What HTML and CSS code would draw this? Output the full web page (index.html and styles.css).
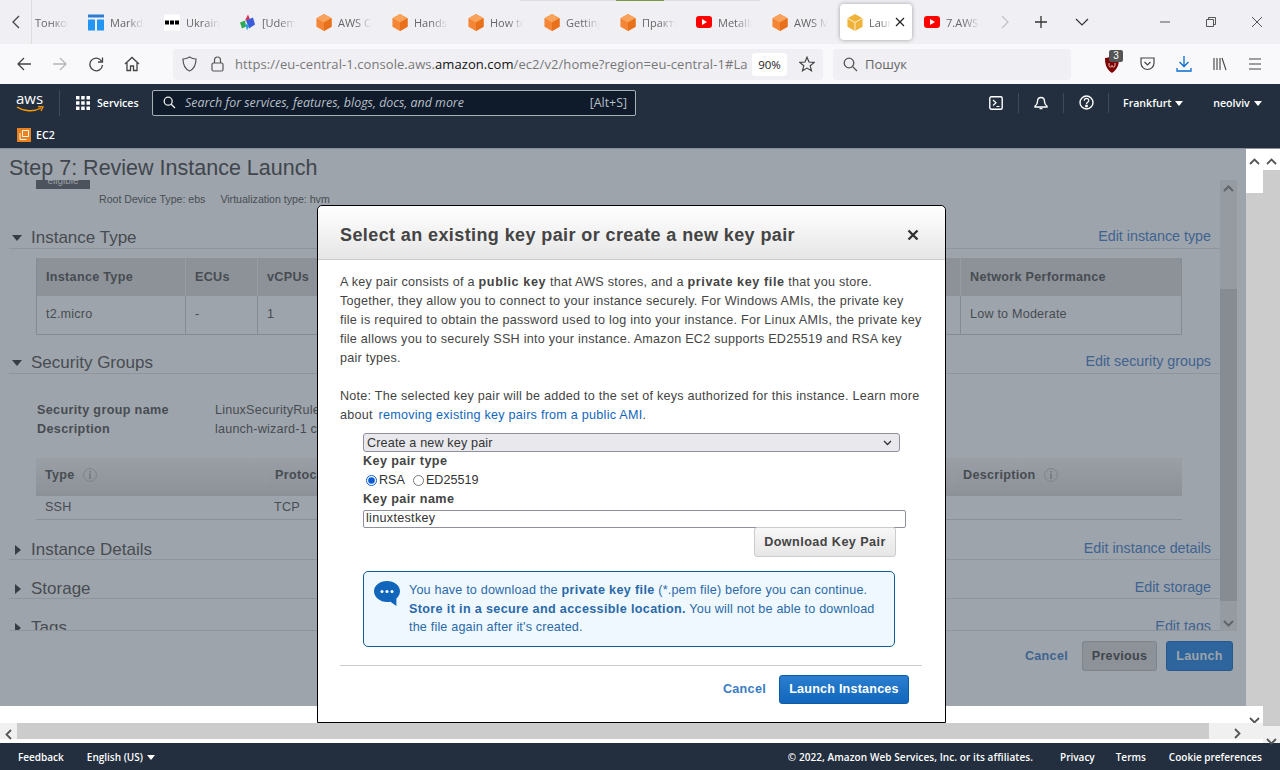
FILE: index.html
```html
<!DOCTYPE html>
<html lang="en">
    <head>
        <meta charset="UTF-8">
        <title>Launch instance wizard | EC2 Management Console</title>
        <link rel="stylesheet" href="styles.css">
    </head>
    <body>
        <svg class="defs" width="0" height="0">
            <symbol id="cube" viewBox="0 0 16 18">
                <path d="M8 0 16 4.5V13.5L8 18 0 13.5V4.5Z" fill="#f58536"/>
                <path d="M8 0 16 4.5 8 9 0 4.5Z" fill="#f9a25c"/>
                <path d="M8 9 16 4.5V13.5L8 18Z" fill="#e8701a"/>
            </symbol>
            <symbol id="yt" viewBox="0 0 16 12">
                <rect width="16" height="12" rx="3" fill="#f00"/>
                <path d="M6 3 11 6 6 9Z" fill="#fff"/>
            </symbol>
            <symbol id="info" viewBox="0 0 14 14">
                <circle cx="7" cy="7" r="6.4" fill="none" stroke="#7d838a"/>
                <path d="M6.4 3h1.3v1.4H6.4zM6.4 5.6h1.3V11H6.4z" fill="#6a7077"/>
            </symbol>
        </svg>
        <div class="browser">
            <div class="load-bar"></div>
            <div class="tabbar">
                <span class="tab-scroll">
                    <svg width="10" height="16" viewBox="0 0 10 16"><path d="M8 2 2 8l6 6" fill="none" stroke="#444" stroke-width="1.3"/></svg>
                </span>
                <div class="tab tab-first"><span class="tab-label">Тонкощі</span></div>
                <div class="tab">
                    <svg class="tab-icon" viewBox="0 0 16 16"><path d="M0 0h16v3H0z" fill="#2b7cd3"/><path d="M0 5h7v11H0zM9 5h7v11H9z" fill="#2196f3"/></svg>
                    <span class="tab-label">Markdown</span>
                </div>
                <div class="tab">
                    <svg class="tab-icon" viewBox="0 0 16 16"><path d="M0 0h16v16H0z" fill="#fff"/><path d="M1 6h4v4H1zM6 6h4v4H6zM11 6h4v4h-4z" fill="#000"/></svg>
                    <span class="tab-label">Ukraine</span>
                </div>
                <div class="tab">
                    <svg class="tab-icon" viewBox="0 0 16 16"><path d="M8 0 10 5 5 6Z" fill="#d9304f"/><path d="M0 8 5 6 6 12 2 14Z" fill="#2fa84f"/><path d="M6 6 13 3 15 10 9 14Z" fill="#3b5bdb"/><path d="M5 9 9 11 7 16Z" fill="#26a0da"/></svg>
                    <span class="tab-label">[Udemy]</span>
                </div>
                <div class="tab"><svg class="tab-icon"><use href="#cube"/></svg><span class="tab-label">AWS Con</span></div>
                <div class="tab"><svg class="tab-icon"><use href="#cube"/></svg><span class="tab-label">Hands-on</span></div>
                <div class="tab"><svg class="tab-icon"><use href="#cube"/></svg><span class="tab-label">How to</span></div>
                <div class="tab"><svg class="tab-icon"><use href="#cube"/></svg><span class="tab-label">Getting</span></div>
                <div class="tab"><svg class="tab-icon"><use href="#cube"/></svg><span class="tab-label">Практика</span></div>
                <div class="tab"><svg class="tab-icon tab-yt"><use href="#yt"/></svg><span class="tab-label">Metallica</span></div>
                <div class="tab"><svg class="tab-icon"><use href="#cube"/></svg><span class="tab-label">AWS Management</span></div>
                <div class="tab tab-active">
                    <svg class="tab-icon" viewBox="0 0 16 18"><path d="M8 0 16 4.5V13.5L8 18 0 13.5V4.5Z" fill="#f0b33a"/><path d="M8 9V18M0 4.5 8 9 16 4.5" fill="none" stroke="#fff" stroke-width=".8"/></svg>
                    <span class="tab-label tab-label-short">Launch</span>
                    <svg class="tab-close" width="10" height="10" viewBox="0 0 10 10"><path d="M1 1l8 8M9 1l-8 8" stroke="#222" stroke-width="1.2"/></svg>
                </div>
                <div class="tab"><svg class="tab-icon tab-yt"><use href="#yt"/></svg><span class="tab-label">7.AWS EC2</span></div>
                <div class="tab-tools">
                    <svg width="10" height="16" viewBox="0 0 10 16"><path d="M2 2l6 6-6 6" fill="none" stroke="#c4c4c4" stroke-width="1.2"/></svg>
                    <svg width="14" height="14" viewBox="0 0 14 14"><path d="M7 1v12M1 7h12" stroke="#333" stroke-width="1.3"/></svg>
                    <svg width="14" height="8" viewBox="0 0 14 8"><path d="M1 1l6 6 6-6" fill="none" stroke="#333" stroke-width="1.2"/></svg>
                </div>
                <div class="win-buttons">
                    <svg width="12" height="12" viewBox="0 0 12 12"><path d="M1 6h10" stroke="#555"/></svg>
                    <svg width="12" height="12" viewBox="0 0 12 12"><path d="M1.5 3.5h7v7h-7zM3.5 3.500v-2h7v7h-2" fill="none" stroke="#555"/></svg>
                    <svg width="12" height="12" viewBox="0 0 12 12"><path d="M1 1l10 10M11 1 1 11" stroke="#555"/></svg>
                </div>
            </div>

            <div class="toolbar">
                <div class="nav-buttons">
                    <svg width="16" height="16" viewBox="0 0 16 16"><path d="M15 8H2M8 2 2 8l6 6" fill="none" stroke="#444" stroke-width="1.3"/></svg>
                    <svg width="16" height="16" viewBox="0 0 16 16"><path d="M1 8h13M8 2l6 6-6 6" fill="none" stroke="#b5b5b8" stroke-width="1.3"/></svg>
                    <svg width="16" height="16" viewBox="0 0 16 16"><path d="M13.5 5A6.3 6.3 0 1 0 14.5 9M14.5 1.5V6H10" fill="none" stroke="#444" stroke-width="1.3"/></svg>
                    <svg width="16" height="16" viewBox="0 0 16 16"><path d="M1 8 8 1.5 15 8M3 7v7.5h3.5V10h3v4.5H13V7" fill="none" stroke="#444" stroke-width="1.3"/></svg>
                </div>
                <div class="urlbar">
                    <svg class="url-shield" width="15" height="16" viewBox="0 0 15 16"><path d="M7.5 1C10 2.6 12 3 14 3c0 5-1 9.500-6.500 12C2 12.500 1 8 1 3c2 0 4-.4 6.500-2Z" fill="none" stroke="#555" stroke-width="1.2"/></svg>
                    <svg class="url-lock" width="13" height="16" viewBox="0 0 13 16"><rect x="1" y="7" width="11" height="8" rx="1.500" fill="none" stroke="#555" stroke-width="1.2"/><path d="M3.500 7V4a3 3 0 0 1 6 0v3" fill="none" stroke="#555" stroke-width="1.2"/></svg>
                    <div class="url-text">https://eu-central-1.console.aws.<b>amazon.com</b>/ec2/v2/home?region=eu-central-1#La</div>
                    <span class="zoom-pill">90%</span>
                    <svg class="url-star" width="16" height="16" viewBox="0 0 16 16"><path d="M8 1.200 10 6l5.200.4-4 3.400 1.300 5L8 12.100 3.500 14.800l1.300-5-4-3.400L6 6Z" fill="none" stroke="#444" stroke-width="1.2"/></svg>
                </div>
                <div class="searchbar">
                    <svg width="15" height="15" viewBox="0 0 15 15"><circle cx="6" cy="6" r="4.800" fill="none" stroke="#555" stroke-width="1.300"/><path d="M9.500 9.500 14 14" stroke="#555" stroke-width="1.300"/></svg>
                    <span>Пошук</span>
                </div>
                <div class="addons">
                    <span class="ublock">
                        <svg width="14" height="17" viewBox="0 0 14 17"><path d="M7 0c2 1.200 4 1.800 7 2 0 6-1 11-7 15C1 13 0 8 0 2c3-.2 5-.8 7-2Z" fill="#800000"/><path d="M4 7v2.500a1.500 1.500 0 0 0 3 0 1.500 1.500 0 0 0 3 0V7" fill="none" stroke="#e8c8c8"/></svg>
                        <span class="ublock-badge">3</span>
                    </span>
                    <svg width="15" height="14" viewBox="0 0 15 14"><path d="M1 1h13v5a6.500 6.500 0 0 1-13 0V1Z" fill="none" stroke="#444" stroke-width="1.200"/><path d="M4.500 5 7.500 8l3-3" fill="none" stroke="#444" stroke-width="1.200"/></svg>
                    <svg width="16" height="16" viewBox="0 0 16 16"><path d="M8 0v10M3.500 6 8 10.500 12.500 6M1 12v3h14v-3" fill="none" stroke="#0a6bd0" stroke-width="1.300"/></svg>
                    <svg width="14" height="14" viewBox="0 0 14 14"><path d="M1 1v12M4 1v12M7 1v12M9 1l4 12" fill="none" stroke="#444" stroke-width="1.100"/></svg>
                    <svg width="14" height="12" viewBox="0 0 14 12"><path d="M1 1h12M1 6h12M1 11h12" stroke="#444" stroke-width="1.200"/></svg>
                </div>
            </div>

            <div class="aws-nav">
                <div class="aws-logo">
                    <span class="aws-word">aws</span>
                    <svg width="28" height="7" viewBox="0 0 28 7"><path d="M1 1c7 4.500 17 5 24 1" fill="none" stroke="#f90" stroke-width="1.400"/><path d="M22 .6l5 .2-2 4.200" fill="none" stroke="#f90" stroke-width="1.200"/></svg>
                </div>
                <div class="aws-services">
                    <svg width="14" height="14" viewBox="0 0 14 14" fill="#fff"><path d="M0 0h3.500v3.500H0zM5.200 0h3.500v3.500H5.200zM10.500 0H14v3.500h-3.500zM0 5.200h3.500v3.500H0zM5.200 5.200h3.500v3.500H5.200zM10.500 5.200H14v3.500h-3.500zM0 10.500h3.500V14H0zM5.200 10.500h3.500V14H5.200zM10.500 10.500H14V14h-3.500z"/></svg>
                    <span>Services</span>
                </div>
                <div class="aws-search">
                    <svg width="13" height="13" viewBox="0 0 13 13"><circle cx="5.200" cy="5.200" r="4" fill="none" stroke="#eee" stroke-width="1.300"/><path d="M8.200 8.200 12 12" stroke="#eee" stroke-width="1.300"/></svg>
                    <span class="aws-search-text">Search for services, features, blogs, docs, and more</span>
                    <span class="aws-search-key">[Alt+S]</span>
                </div>
                <div class="aws-right">
                    <span class="aws-icon">
                        <svg width="14" height="14" viewBox="0 0 14 14"><rect x=".8" y=".8" width="12.400" height="12.400" rx="1.500" fill="none" stroke="#fff" stroke-width="1.400"/><path d="M4 4l3 2.800L4 9.500M7.500 10.500H10.500" fill="none" stroke="#fff" stroke-width="1.200"/></svg>
                    </span>
                    <span class="aws-icon">
                        <svg width="14" height="14" viewBox="0 0 14 14"><path d="M7 1.500c-2.500 0-3.500 2-3.500 4 0 2.500-1 3.500-2.500 4.700v.8h12v-.8C11.500 9 10.500 8 10.500 5.500c0-2-1-4-3.500-4Z" fill="none" stroke="#fff" stroke-width="1.400"/><path d="M5.500 12.500h3" stroke="#fff" stroke-width="1.500"/></svg>
                    </span>
                    <span class="aws-icon">
                        <svg width="15" height="15" viewBox="0 0 15 15"><circle cx="7.500" cy="7.500" r="6.500" fill="none" stroke="#fff" stroke-width="1.400"/><path d="M5.300 5.700c0-3 4.500-3 4.500-.2 0 1.800-2.300 1.800-2.300 3.500M6.800 10.300h1.400v1.400H6.800z" fill="none" stroke="#fff" stroke-width="1.200"/></svg>
                    </span>
                    <span class="aws-menu aws-region">Frankfurt <i class="caret"></i></span>
                    <span class="aws-menu aws-user">neolviv <i class="caret"></i></span>
                </div>
            </div>
            <div class="aws-sub">
                <svg width="14" height="14" viewBox="0 0 14 14"><rect width="14" height="14" fill="#e8821e"/><path d="M5.500 2.500h6v6h-6zM3 5v6.500h6.500" fill="none" stroke="#fff" stroke-width=".9"/></svg>
                <span>EC2</span>
            </div>

            <div class="workspace">
                <div class="window">
                    <div class="window-top">
                        <div class="page-col">
                            <div class="page">
                                <h1 class="page-title">Step 7: Review Instance Launch</h1>
                                <div class="scroll-area">
                                    <div class="scroll-content">
                                        <div class="ami-badge"><span>eligible</span></div>
                                        <p class="ami-info"><span>Root Device Type: ebs</span><span>Virtualization type: hvm</span></p>

                                        <div class="section-head head-type">
                                            <i class="arrow-open"></i><h2>Instance Type</h2>
                                            <a href="#">Edit instance type</a>
                                        </div>
                                        <div class="grid-table type-table">
                                            <div class="grid-row grid-head">
                                                <div class="cell c-type">Instance Type</div>
                                                <div class="cell c-ecu">ECUs</div>
                                                <div class="cell c-cpu">vCPUs</div>
                                                <div class="cell c-net">Network Performance</div>
                                            </div>
                                            <div class="grid-row grid-body">
                                                <div class="cell c-type">t2.micro</div>
                                                <div class="cell c-ecu">-</div>
                                                <div class="cell c-cpu">1</div>
                                                <div class="cell c-net">Low to Moderate</div>
                                            </div>
                                        </div>

                                        <div class="section-head head-sec">
                                            <i class="arrow-open"></i><h2>Security Groups</h2>
                                            <a href="#">Edit security groups</a>
                                        </div>
                                        <dl class="sg-info">
                                            <dt>Security group name</dt><dd>LinuxSecurityRules</dd>
                                            <dt>Description</dt><dd>launch-wizard-1 created</dd>
                                        </dl>
                                        <div class="rule-table">
                                            <div class="rule-row rule-head">
                                                <div class="rule-type">Type <svg width="14" height="14"><use href="#info"/></svg></div>
                                                <div class="rule-proto">Protocol</div>
                                                <div class="rule-desc">Description <svg width="14" height="14"><use href="#info"/></svg></div>
                                            </div>
                                            <div class="rule-row rule-body">
                                                <div class="rule-type">SSH</div>
                                                <div class="rule-proto">TCP</div>
                                            </div>
                                        </div>

                                        <div class="section-head head-closed head-details">
                                            <i class="arrow-closed"></i><h2>Instance Details</h2>
                                            <a href="#">Edit instance details</a>
                                        </div>
                                        <div class="section-head head-closed">
                                            <i class="arrow-closed"></i><h2>Storage</h2>
                                            <a href="#">Edit storage</a>
                                        </div>
                                        <div class="section-head head-closed">
                                            <i class="arrow-closed"></i><h2>Tags</h2>
                                            <a href="#">Edit tags</a>
                                        </div>
                                    </div>
                                    <div class="inner-scroll">
                                        <svg width="11" height="7" viewBox="0 0 11 7"><path d="M1 6l4.500-4.500L10 6" fill="none" stroke="#5f656b" stroke-width="2"/></svg>
                                        <div class="inner-thumb"></div>
                                        <svg width="11" height="7" viewBox="0 0 11 7"><path d="M1 1l4.500 4.500L10 1" fill="none" stroke="#5f656b" stroke-width="2"/></svg>
                                    </div>
                                </div>
                                <div class="page-actions">
                                    <a href="#">Cancel</a>
                                    <span class="btn-previous">Previous</span>
                                    <span class="btn-launch">Launch</span>
                                </div>
                            </div>
                        </div>
                        <div class="win-scroll">
                            <span class="win-scroll-up"><svg width="11" height="7" viewBox="0 0 11 7"><path d="M1 6l4.500-4.500L10 6" fill="none" stroke="#555" stroke-width="1.800"/></svg></span>
                            <div class="win-scroll-thumb"></div>
                            <span class="win-scroll-down"><svg width="11" height="7" viewBox="0 0 11 7"><path d="M1 1l4.500 4.500L10 1" fill="none" stroke="#555" stroke-width="1.800"/></svg></span>
                        </div>
                    </div>
                    <div class="hscroll">
                        <span class="hscroll-left"><svg width="7" height="11" viewBox="0 0 7 11"><path d="M6 1 1.500 5.500 6 10" fill="none" stroke="#555" stroke-width="1.800"/></svg></span>
                        <div class="hscroll-thumb"></div>
                        <span class="hscroll-right"><svg width="7" height="11" viewBox="0 0 7 11"><path d="M1 1l4.500 4.500L1 10" fill="none" stroke="#555" stroke-width="1.800"/></svg></span>
                    </div>
                </div>
                <div class="outer-scroll">
                    <span class="outer-up"><svg width="11" height="7" viewBox="0 0 11 7"><path d="M1 6l4.500-4.500L10 6" fill="none" stroke="#555" stroke-width="1.800"/></svg></span>
                    <div class="outer-thumb"></div>
                    <span class="outer-down"><svg width="11" height="7" viewBox="0 0 11 7"><path d="M1 1l4.500 4.500L10 1" fill="none" stroke="#555" stroke-width="1.800"/></svg></span>
                </div>

                <div class="modal">
                    <div class="modal-head">
                        <h3>Select an existing key pair or create a new key pair</h3>
                        <svg width="12" height="12" viewBox="0 0 12 12"><path d="M1.500 1.500l9 9M10.500 1.500l-9 9" stroke="#333" stroke-width="2.400"/></svg>
                    </div>
                    <div class="modal-body">
                        <p>A key pair consists of a <b>public key</b> that AWS stores, and a <b>private key file</b> that you store. Together, they allow you to connect to your instance securely. For Windows AMIs, the private key file is required to obtain the password used to log into your instance. For Linux AMIs, the private key file allows you to securely SSH into your instance. Amazon EC2 supports ED25519 and RSA key pair types.</p>
                        <p class="note">Note: The selected key pair will be added to the set of keys authorized for this instance. Learn more about <a href="#">removing existing key pairs from a public AMI</a>.</p>
                        <div class="key-form">
                            <div class="select-box">
                                <span>Create a new key pair</span>
                                <svg width="9" height="6" viewBox="0 0 9 6"><path d="M1 1l3.500 3.500L8 1" fill="none" stroke="#333" stroke-width="1.300"/></svg>
                            </div>
                            <label class="form-label">Key pair type</label>
                            <div class="radio-row">
                                <label><input type="radio" name="keytype" checked>RSA</label>
                                <label><input type="radio" name="keytype">ED25519</label>
                            </div>
                            <label class="form-label">Key pair name</label>
                            <input class="name-input" type="text" value="linuxtestkey">
                            <div class="download-row"><span class="btn-download">Download Key Pair</span></div>
                            <div class="alert">
                                <svg width="26" height="25" viewBox="0 0 26 25"><path d="M13 0c7.200 0 13 4.600 13 10.300 0 2.800-1.400 5.300-3.600 7.100V25l-6-4.200c-1.100.2-2.200.3-3.400.3C5.800 21 0 16.100 0 10.300 0 4.600 5.800 0 13 0Z" fill="#1166bb"/><circle cx="8" cy="10.500" r="1.500" fill="#fff"/><circle cx="13" cy="10.500" r="1.500" fill="#fff"/><circle cx="18" cy="10.500" r="1.500" fill="#fff"/></svg>
                                <p>You have to download the <b>private key file</b> (*.pem file) before you can continue. <b>Store it in a secure and accessible location.</b> You will not be able to download the file again after it's created.</p>
                            </div>
                        </div>
                    </div>
                    <div class="modal-foot">
                        <a href="#">Cancel</a>
                        <span class="btn-primary">Launch Instances</span>
                    </div>
                </div>
            </div>

            <div class="aws-footer">
                <span class="foot-link">Feedback</span>
                <span class="foot-lang">English (US) <i class="caret"></i></span>
                <span class="foot-copy">© 2022, Amazon Web Services, Inc. or its affiliates.</span>
                <span class="foot-privacy">Privacy</span>
                <span class="foot-terms">Terms</span>
                <span class="foot-cookie">Cookie preferences</span>
            </div>
        </div>
    </body>
</html>
```

FILE: styles.css
```css
*{
    box-sizing: border-box;
}
body{
    margin: 0;
    font-family: "Liberation Sans", Arial, sans-serif;
    color: #444;
    overflow: hidden;
}
a{
    text-decoration: none;
}
.defs{
    position: absolute;
}
.browser{
    position: relative;
    width: 1280px;
    height: 770px;
    display: flex;
    flex-direction: column;
    background: #fff;
}
.load-bar{
    position: absolute;
    left: 520px;
    top: 0;
    width: 240px;
    height: 1px;
    background: linear-gradient(90deg, #ddd 96px, #7a9a4a 96px, #7a9a4a 144px, #ddd 144px);
}

/* tab strip */
.tabbar{
    height: 44px;
    background: #f0f0f4;
    display: flex;
    align-items: center;
    font-family: "Open Sans", sans-serif;
    font-size: 11px;
    flex: none;
}
.tab-scroll{
    width: 32px;
    height: 44px;
    padding-left: 11px;
    display: flex;
    align-items: center;
    border-right: 1px solid #ddd;
}
.tab{
    width: 76px;
    height: 36px;
    padding-left: 7px;
    display: flex;
    align-items: center;
    gap: 6px;
    flex: none;
    overflow: hidden;
}
.tab-first{
    width: 49px;
    padding-left: 3px;
}
.tab-icon{
    width: 16px;
    height: 17px;
    flex: none;
}
.tab-yt{
    height: 12px;
}
.tab-label{
    color: #666;
    white-space: nowrap;
    overflow: hidden;
    width: 34px;
    -webkit-mask-image: linear-gradient(90deg, #000 50%, transparent);
    mask-image: linear-gradient(90deg, #000 50%, transparent);
}
.tab-active{
    width: 72px;
    margin-left: -1px;
    margin-right: 5px;
    background: #fff;
    border-radius: 4px;
    box-shadow: 0 0 4px rgba(0,0,0,.35);
}
.tab-label-short{
    width: 22px;
}
.tab-close{
    margin-left: -2px;
    flex: none;
}
.tab-tools{
    width: 117px;
    padding-left: 7px;
    display: flex;
    align-items: center;
    gap: 24px;
    flex: none;
}
.tab-tools svg:last-child{
    margin-left: 3px;
}
.win-buttons{
    margin-left: auto;
    padding-right: 17px;
    display: flex;
    gap: 34px;
}

/* address bar */
.toolbar{
    height: 40px;
    background: #f9f9fb;
    display: flex;
    align-items: center;
    flex: none;
}
.nav-buttons{
    width: 173px;
    padding-left: 16px;
    display: flex;
    gap: 20px;
    flex: none;
}
.urlbar{
    width: 650px;
    height: 31px;
    background: #f0f0f4;
    border-radius: 4px;
    display: flex;
    align-items: center;
    padding-left: 9px;
    flex: none;
}
.url-shield{
    margin-right: 14px;
    flex: none;
}
.url-lock{
    margin-right: 11px;
    flex: none;
}
.url-text{
    width: 517px;
    white-space: nowrap;
    overflow: hidden;
    font-family: "Open Sans", sans-serif;
    font-size: 13px;
    letter-spacing: .07px;
    color: #777;
}
.url-text b{
    font-weight: 400;
    color: #111;
}
.zoom-pill{
    width: 35px;
    height: 23px;
    line-height: 23px;
    background: #fff;
    border-radius: 3px;
    text-align: center;
    font-family: "Open Sans", sans-serif;
    font-size: 11.5px;
    color: #222;
    flex: none;
}
.url-star{
    margin-left: 12px;
    flex: none;
}
.searchbar{
    width: 238px;
    height: 31px;
    margin-left: 10px;
    background: #f0f0f4;
    border-radius: 4px;
    display: flex;
    align-items: center;
    gap: 7px;
    padding-left: 10px;
    font-family: "Open Sans", sans-serif;
    font-size: 13px;
    color: #666;
    flex: none;
}
.addons{
    flex: 1;
    padding-left: 34px;
    display: flex;
    align-items: center;
    gap: 21px;
}
.ublock{
    position: relative;
    display: flex;
}
.ublock-badge{
    position: absolute;
    left: 4px;
    top: -6px;
    width: 14px;
    height: 12px;
    background: #555;
    color: #fff;
    border-radius: 2px;
    font-size: 10px;
    line-height: 12px;
    text-align: center;
}

/* aws console header */
.aws-nav{
    height: 37px;
    background: #232f3e;
    display: flex;
    align-items: center;
    color: #fff;
    font-family: "Open Sans", sans-serif;
    font-size: 10.6px;
    font-weight: 600;
    flex: none;
}
.aws-logo{
    width: 60px;
    height: 26px;
    padding-left: 16px;
    border-right: 1px solid #3d4a5a;
    display: flex;
    flex-direction: column;
    flex: none;
}
.aws-word{
    font-size: 15px;
    font-weight: 400;
    line-height: 15px;
    margin-top: 1px;
}
.aws-services{
    width: 92px;
    padding-left: 16px;
    display: flex;
    align-items: center;
    gap: 7px;
    flex: none;
}
.aws-search{
    width: 484px;
    height: 26px;
    background: #0f1b2a;
    border: 1px solid #a9b0b8;
    border-radius: 2px;
    display: flex;
    align-items: center;
    padding: 0 8px 0 10px;
    color: #b8bfc7;
    font-weight: 400;
    font-size: 12.4px;
    flex: none;
}
.aws-search-text{
    margin-left: 9px;
    font-style: italic;
}
.aws-search-key{
    margin-left: auto;
}
.aws-right{
    flex: 1;
    display: flex;
    align-items: center;
    padding-left: 338px;
}
.aws-icon{
    width: 45px;
    height: 20px;
    display: flex;
    align-items: center;
    justify-content: center;
    border-right: 1px solid #3d4a5a;
    flex: none;
}
.aws-menu{
    white-space: nowrap;
    flex: none;
}
.aws-region{
    margin-left: 14px;
}
.aws-user{
    margin-left: 30px;
}
.caret{
    display: inline-block;
    margin-left: 1px;
    border: 4px solid transparent;
    border-top: 5px solid currentColor;
    border-bottom: 0;
    vertical-align: 1px;
}
.aws-sub{
    height: 28px;
    background: #232f3e;
    border-bottom: 1px solid #8a9099;
    display: flex;
    align-items: center;
    gap: 5px;
    padding-left: 17px;
    color: #fff;
    font-family: "Open Sans", sans-serif;
    font-size: 10.6px;
    font-weight: 600;
    flex: none;
}

/* page under the dialog */
.workspace{
    position: relative;
    flex: 1;
    display: flex;
    min-height: 0;
}
.window{
    width: 1263px;
    display: flex;
    flex-direction: column;
    background: #fff;
}
.window-top{
    height: 574px;
    display: flex;
}
.page-col{
    width: 1246px;
    flex: none;
}
.page{
    height: 557px;
    background: #9ea4ab;
    display: flex;
    flex-direction: column;
    overflow: hidden;
}
.page-title{
    margin: 0;
    height: 31px;
    padding: 7px 0 0 9px;
    font-size: 21.5px;
    font-weight: 400;
    line-height: 24px;
    color: #40464d;
    flex: none;
}
.scroll-area{
    height: 451px;
    width: 1237px;
    display: flex;
    flex: none;
}
.scroll-content{
    position: relative;
    width: 1220px;
    height: 451px;
    overflow: hidden;
    flex: none;
}
.scroll-content::after{
    content: "";
    position: absolute;
    left: 9px;
    right: 0;
    bottom: 0;
    height: 1px;
    background: #8f959c;
}
.ami-badge{
    width: 54px;
    height: 9px;
    margin-left: 36px;
    background: #4d535c;
    overflow: hidden;
    color: #9aa0a7;
    font-size: 10px;
    line-height: 2px;
    text-align: center;
}
.ami-info{
    margin: 3px 0 0 99px;
    height: 14px;
    font-size: 10.6px;
    line-height: 14px;
    color: #474d54;
}
.ami-info span + span{
    margin-left: 15px;
}
.section-head{
    margin-left: 9px;
    height: 21px;
    padding: 0 9px 0 3px;
    border-bottom: 1px solid #8f959c;
    display: flex;
    align-items: center;
    color: #474c52;
}
.section-head h2{
    margin: 0 0 0 9px;
    font-size: 17px;
    font-weight: 400;
}
.section-head a{
    margin-left: auto;
    margin-bottom: 4px;
    font-size: 14.3px;
    color: #3f6390;
}
.arrow-open{
    width: 0;
    height: 0;
    border: 5px solid transparent;
    border-top: 6px solid #383d43;
    border-bottom: 0;
    flex: none;
}
.arrow-closed{
    width: 0;
    height: 0;
    margin-left: 3px;
    border: 5px solid transparent;
    border-left: 6px solid #383d43;
    border-right: 0;
    flex: none;
}
.head-type{
    margin-top: 22px;
}
.head-sec{
    margin-top: 18px;
}
.grid-table{
    margin: 9px 0 0 36px;
    width: 1146px;
    border: 1px solid #858b92;
    border-top: 0;
    font-size: 12.6px;
    letter-spacing: .2px;
    color: #474c52;
}
.grid-row{
    height: 38px;
    display: flex;
}
.grid-head{
    background: #8d9298;
    font-weight: 700;
    letter-spacing: .3px;
}
.grid-body .cell{
    padding-bottom: 2px;
}
.cell{
    padding: 0 9px;
    display: flex;
    align-items: center;
    border-right: 1px solid #858b92;
    flex: none;
}
.grid-head .cell{
    border-right-color: #979ca2;
}
.c-type{
    width: 149px;
}
.c-ecu{
    width: 72px;
}
.c-cpu{
    width: 703px;
}
.c-net{
    width: 221px;
    border-right: 0;
}
.sg-info{
    margin: 27px 0 0 37px;
    display: grid;
    grid-template-columns: 178px 1fr;
    font-size: 12.6px;
    line-height: 19px;
    letter-spacing: .2px;
    color: #474c52;
}
.sg-info dt{
    font-weight: 700;
    letter-spacing: .35px;
}
.sg-info dd{
    margin: 0;
}
.rule-table{
    margin: 19px 0 0 36px;
    width: 1146px;
    font-size: 12.6px;
    letter-spacing: .2px;
    color: #474c52;
}
.rule-row{
    display: flex;
    align-items: center;
    border-bottom: 1px solid #8a9097;
}
.rule-head{
    height: 38px;
    padding-bottom: 4px;
    background: linear-gradient(#9a9fa6, #8d9298);
    font-weight: 700;
    letter-spacing: .3px;
}
.rule-body{
    height: 24px;
    padding-bottom: 2px;
}
.rule-row > div{
    display: flex;
    align-items: center;
    gap: 8px;
    flex: none;
    height: 20px;
}
.rule-type{
    width: 229px;
    padding-left: 9px;
}
.rule-proto{
    width: 688px;
    padding-left: 9px;
}
.rule-head .rule-proto{
    border-left: 1px solid #979ca2;
}
.rule-desc{
    padding-left: 9px;
    border-left: 1px solid #979ca2;
}
.head-closed{
    padding-top: 20px;
    height: 39px;
}
.head-closed h2{
    margin-left: 10px;
}
.head-details{
    margin-top: 1px;
}
.inner-scroll{
    width: 17px;
    height: 451px;
    background: #969ba1;
    display: flex;
    flex-direction: column;
    align-items: center;
    padding-top: 5px;
    flex: none;
}
.inner-thumb{
    width: 17px;
    height: 312px;
    margin-top: 97px;
    margin-bottom: 19px;
    background: #878c92;
    flex: none;
}
.page-actions{
    height: 31px;
    margin-top: 9px;
    padding-right: 13px;
    display: flex;
    justify-content: flex-end;
    align-items: center;
    font-size: 12.6px;
    font-weight: 700;
    letter-spacing: .3px;
    flex: none;
}
.page-actions a{
    color: #3f6390;
    margin-right: 14px;
}
.btn-previous{
    width: 75px;
    height: 30px;
    line-height: 28px;
    margin-right: 9px;
    background: #8d9298;
    border: 1px solid #7e848b;
    border-radius: 3px;
    text-align: center;
    color: #40464d;
}
.btn-launch{
    width: 67px;
    height: 30px;
    line-height: 28px;
    background: #2f659d;
    border: 1px solid #29598c;
    border-radius: 3px;
    text-align: center;
    color: #9ea4ab;
}

/* browser scrollbars */
.win-scroll{
    width: 17px;
    background: #fff;
    display: flex;
    flex-direction: column;
    flex: none;
}
.win-scroll-up{
    height: 44px;
    padding-top: 2px;
    text-align: center;
    display: block;
}
.win-scroll-thumb{
    flex: 1;
    background: #ccc;
}
.win-scroll-down{
    height: 17px;
    padding-top: 4px;
    text-align: center;
    display: block;
}
.hscroll{
    height: 16px;
    display: flex;
    background: #f0f0f0;
}
.hscroll-left{
    width: 17px;
    padding: 3px 0 0 5px;
    flex: none;
}
.hscroll-thumb{
    width: 1192px;
    background: #ccc;
    flex: none;
}
.hscroll-right{
    flex: 1;
    padding: 2px 0 0 25px;
}
.outer-scroll{
    width: 17px;
    background: #fff;
    display: flex;
    flex-direction: column;
    flex: none;
}
.outer-up{
    height: 21px;
    padding-top: 2px;
    text-align: center;
    display: block;
}
.outer-thumb{
    flex: 1;
    background: #ccc;
}
.outer-down{
    height: 17px;
    padding-top: 5px;
    background: #f0f0f0;
    text-align: center;
    display: block;
}

/* key pair dialog */
.modal{
    position: absolute;
    left: 317px;
    top: 56px;
    width: 629px;
    height: 518px;
    background: #fff;
    border: 1px solid #000;
    border-radius: 5px 5px 0 0;
    display: flex;
    flex-direction: column;
}
.modal-head{
    height: 54px;
    padding: 5px 26px 0 22px;
    background: linear-gradient(#fff, #e6e6e6);
    border-bottom: 1px solid #ccc;
    border-radius: 5px 5px 0 0;
    display: flex;
    align-items: center;
    justify-content: space-between;
    flex: none;
}
.modal-head h3{
    margin: 0;
    font-size: 18px;
    font-weight: 700;
    letter-spacing: .4px;
    color: #444;
}
.modal-body{
    padding: 13px 23px 0 22px;
    font-size: 12.6px;
    line-height: 19px;
    letter-spacing: .25px;
    flex: 1;
}
.modal-body p{
    margin: 0;
}
.modal-body b{
    letter-spacing: .6px;
}
.modal-body .note{
    margin-top: 19px;
    letter-spacing: .25px;
}
.modal-body a{
    color: #1166bb;
    margin-left: 2px;
}
.key-form{
    margin: 8px 0 0 23px;
    letter-spacing: .15px;
}
.select-box{
    width: 537px;
    height: 19px;
    padding: 1px 7px 0 3px;
    background: #e9e9ed;
    border: 1px solid #8f8f9d;
    border-radius: 3px;
    display: flex;
    align-items: center;
    justify-content: space-between;
    color: #333;
}
.form-label{
    display: block;
    height: 19px;
    font-weight: 700;
    letter-spacing: .4px;
}
.radio-row{
    height: 19px;
    display: flex;
    align-items: center;
    gap: 5px;
    letter-spacing: 0;
    color: #333;
}
.radio-row label{
    display: flex;
    align-items: center;
}
.radio-row input{
    width: 11px;
    height: 11px;
    margin: 0 2px 0 3px;
    accent-color: #0a5bd0;
}
.name-input{
    display: block;
    width: 543px;
    height: 18px;
    margin-top: 1px;
    padding: 0 2px 2px;
    border: 1px solid #8f8f9d;
    border-radius: 2px;
    font: 12.6px "Liberation Sans", Arial, sans-serif;
    letter-spacing: .3px;
    color: #333;
}
.download-row{
    width: 533px;
    margin-top: -1px;
    display: flex;
    justify-content: flex-end;
}
.btn-download{
    width: 142px;
    height: 30px;
    line-height: 28px;
    background: linear-gradient(#f7f7f7, #e6e6e6);
    border: 1px solid #ccc;
    border-radius: 3px;
    text-align: center;
    font-weight: 700;
    letter-spacing: .45px;
    color: #444;
}
.alert{
    width: 532px;
    height: 76px;
    margin-top: 14px;
    padding: 9px 10px 0 10px;
    background: #eff8ff;
    border: 1px solid #0f5f9e;
    border-radius: 5px;
    display: flex;
    gap: 9px;
    line-height: 18.6px;
    letter-spacing: .18px;
    color: #2a69a8;
}
.alert svg{
    flex: none;
}
.alert p{
    margin: 0;
}
.alert b{
    letter-spacing: .35px;
}
.modal-foot{
    height: 57px;
    margin: 0 23px 0 22px;
    padding: 0 13px 10px 0;
    border-top: 1px solid #ccc;
    display: flex;
    justify-content: flex-end;
    align-items: center;
    gap: 13px;
    font-size: 12.6px;
    font-weight: 700;
    letter-spacing: .2px;
    flex: none;
}
.modal-foot a{
    color: #3a7cc4;
    letter-spacing: .3px;
}
.btn-primary{
    width: 130px;
    height: 29px;
    line-height: 27px;
    background: linear-gradient(#2a7fd0, #1166bb);
    border: 1px solid #0e5ca8;
    border-radius: 3px;
    text-align: center;
    color: #fff;
}

.aws-footer{
    height: 27px;
    background: #232f3e;
    display: flex;
    align-items: center;
    color: #fff;
    font-family: "Open Sans", sans-serif;
    font-size: 10px;
    font-weight: 600;
    flex: none;
}
.foot-link{
    margin-left: 18px;
}
.foot-lang{
    margin-left: 23px;
}
.foot-copy{
    margin-left: auto;
    letter-spacing: .08px;
}
.foot-privacy{
    margin-left: 27px;
}
.foot-terms{
    margin-left: 21px;
}
.foot-cookie{
    margin-left: 23px;
    margin-right: 18px;
}
```
